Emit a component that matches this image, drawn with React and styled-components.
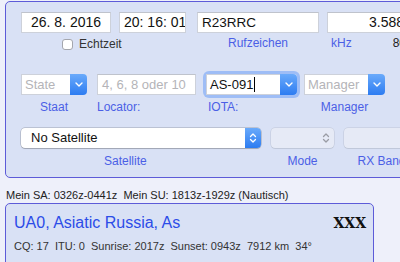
import React from "react";
import styled, { createGlobalStyle } from "styled-components";

const Global = createGlobalStyle`
  html, body { margin: 0; padding: 0; }
  body {
    background: #eef0fa;
    font-family: "Liberation Sans", Arial, sans-serif;
    width: 400px;
    height: 262px;
    overflow: hidden;
  }
`;

const Page = styled.div`
  width: 400px;
  height: 262px;
  overflow: hidden;
`;

const Panel = styled.div`
  box-sizing: border-box;
  margin: ${(p) => p.$margin};
  width: ${(p) => p.$width}px;
  background: #d9e1f5;
  border: 1px solid #5d5bd8;
  border-radius: 5px;
  padding: ${(p) => p.$pad};
`;

const Row = styled.div`
  display: flex;
  align-items: flex-start;
  margin-top: ${(p) => p.$top || 0}px;
`;

const Group = styled.div`
  display: flex;
  flex-direction: column;
  width: ${(p) => p.$w}px;
  margin-right: ${(p) => p.$mr || 0}px;
  flex-shrink: 0;
`;

const TextField = styled.div`
  box-sizing: border-box;
  height: 21px;
  background: #fff;
  border: 1px solid #cdd1da;
  border-top-color: #bfc3cc;
  font-size: ${(p) => p.$fs || 14}px;
  line-height: 19px;
  color: ${(p) => (p.$ph ? "#b4b4b8" : "#111")};
  padding: 0 4px;
  text-align: ${(p) => p.$align || "left"};
  white-space: nowrap;
  overflow: hidden;
`;

const Label = styled.div`
  font-size: 12px;
  line-height: 14px;
  color: ${(p) => (p.$dark ? "#222" : "#4b5fe6")};
  margin-top: ${(p) => p.$top ?? 3}px;
  padding-left: ${(p) => p.$pl || 0}px;
  text-align: ${(p) => p.$align || "left"};
  white-space: nowrap;
`;

const LabelPair = styled.div`
  display: flex;
  gap: 41px;
  margin-top: 3px;
  padding-left: 4px;
`;

const FieldPair = styled.div`
  display: flex;
  gap: 8px;
`;

const CheckRow = styled.label`
  display: flex;
  align-items: center;
  gap: 6px;
  margin-top: 5px;
  padding-left: 41px;
  font-size: 12px;
  line-height: 12px;
  color: #333;
`;

const CheckBox = styled.span`
  box-sizing: border-box;
  width: 11px;
  height: 11px;
  background: #fff;
  border: 1px solid #a4a6ad;
  border-radius: 3px;
`;

const Combo = styled.div`
  display: flex;
  height: 21px;
  border-radius: 3px;
  box-shadow: ${(p) => (p.$focus ? "0 0 0 3px rgba(110,160,245,0.55)" : "none")};
`;

const ComboText = styled.div`
  box-sizing: border-box;
  flex: 1;
  min-width: 0;
  background: #fff;
  border: 1px solid #cdd1da;
  border-right: none;
  font-size: 13px;
  line-height: 19px;
  padding: 0 3px;
  color: ${(p) => (p.$ph ? "#b4b4b8" : "#111")};
  display: flex;
  align-items: center;
  white-space: nowrap;
  overflow: hidden;
`;

const Caret = styled.span`
  display: inline-block;
  width: 1px;
  height: 15px;
  background: #000;
  margin-left: 1px;
`;

const BlueButton = styled.div`
  width: ${(p) => p.$w || 17}px;
  flex-shrink: 0;
  background: linear-gradient(#6aaafb, #2d7cf1);
  border-radius: 0 4px 4px 0;
  display: flex;
  align-items: center;
  justify-content: center;
`;

const Popup = styled.div`
  box-sizing: border-box;
  display: flex;
  height: 20px;
  border-radius: 4px;
  background: ${(p) => (p.$disabled ? "#e6eaf6" : "#fff")};
  box-shadow: 0 0 0 0.5px rgba(0, 0, 0, ${(p) => (p.$disabled ? 0.12 : 0.28)}),
    0 1px 1px rgba(0, 0, 0, ${(p) => (p.$disabled ? 0.06 : 0.15)});
`;

const PopupText = styled.div`
  flex: 1;
  font-size: 13px;
  line-height: 20px;
  padding-left: 10px;
  color: #111;
  white-space: nowrap;
`;

const GrayArrows = styled.div`
  width: 17px;
  display: flex;
  align-items: center;
  justify-content: center;
`;

const InfoLine = styled.div`
  font-size: 11px;
  line-height: 13px;
  color: #222;
  margin: 11px 0 0 6px;
  white-space: pre;
`;

const TitleRow = styled.div`
  display: flex;
  justify-content: space-between;
  align-items: flex-start;
`;

const Title = styled.div`
  font-size: 16px;
  line-height: 19px;
  color: #2c4ce8;
`;

const Mark = styled.div`
  font-family: "DejaVu Serif", "Liberation Serif", serif;
  font-weight: bold;
  font-size: 14px;
  line-height: 19px;
  margin-top: 1px;
  color: #111;
`;

const Details = styled.div`
  font-size: 11px;
  line-height: 13px;
  color: #333;
  margin-top: 7px;
  white-space: pre;
`;

const ChevronDown = ({ color = "#fff" }) => (
  <svg width="8" height="5" viewBox="0 0 8 5">
    <polyline points="1,1 4,4 7,1" fill="none" stroke={color} strokeWidth="1.4" strokeLinecap="round" strokeLinejoin="round" />
  </svg>
);

const UpDown = ({ color = "#fff" }) => (
  <svg width="8" height="12" viewBox="0 0 8 12">
    <polyline points="1.5,4.5 4,2 6.5,4.5" fill="none" stroke={color} strokeWidth="1.3" strokeLinecap="round" strokeLinejoin="round" />
    <polyline points="1.5,7.5 4,10 6.5,7.5" fill="none" stroke={color} strokeWidth="1.3" strokeLinecap="round" strokeLinejoin="round" />
  </svg>
);

export default function App() {
  return (
    <Page>
      <Global />
      <Panel $margin="1px 0 0 5px" $width={440} $pad="10px 0 9px 15px">
        <Row>
          <Group $w={165} $mr={11}>
            <FieldPair>
              <TextField style={{ width: 90 }} $align="center">26. 8. 2016</TextField>
              <TextField style={{ width: 67 }} $align="center">20: 16: 01</TextField>
            </FieldPair>
            <CheckRow>
              <CheckBox />
              Echtzeit
            </CheckRow>
          </Group>
          <Group $w={122} $mr={8}>
            <TextField $fs={13.5}>R23RRC</TextField>
            <Label $align="center">Rufzeichen</Label>
          </Group>
          <Group $w={82}>
            <TextField $align="right">3.588</TextField>
            <LabelPair>
              <Label $top={0}>kHz</Label>
              <Label $top={0} $dark>80m</Label>
            </LabelPair>
          </Group>
        </Row>

        <Row $top={24}>
          <Group $w={66} $mr={10}>
            <Combo>
              <ComboText $ph>State</ComboText>
              <BlueButton><ChevronDown /></BlueButton>
            </Combo>
            <Label $top={5} $align="center">Staat</Label>
          </Group>
          <Group $w={99} $mr={10}>
            <TextField $fs={13} $ph>4, 6, 8 oder 10</TextField>
            <Label $top={5}>Locator:</Label>
          </Group>
          <Group $w={91} $mr={7}>
            <Combo $focus>
              <ComboText>AS-091<Caret /></ComboText>
              <BlueButton><ChevronDown /></BlueButton>
            </Combo>
            <Label $top={5} $pl={2}>IOTA:</Label>
          </Group>
          <Group $w={81}>
            <Combo>
              <ComboText $ph>Manager</ComboText>
              <BlueButton><ChevronDown /></BlueButton>
            </Combo>
            <Label $top={5} $align="center">Manager</Label>
          </Group>
        </Row>

        <Row $top={14}>
          <Group $w={240} $mr={10}>
            <Popup>
              <PopupText>No Satellite</PopupText>
              <BlueButton $w={16}><UpDown /></BlueButton>
            </Popup>
            <Label $top={6} $pl={83}>Satellite</Label>
          </Group>
          <Group $w={63} $mr={10}>
            <Popup $disabled>
              <PopupText />
              <GrayArrows><UpDown color="#9a9ca4" /></GrayArrows>
            </Popup>
            <Label $top={6} $align="center">Mode</Label>
          </Group>
          <Group $w={75}>
            <Popup $disabled>
              <PopupText />
              <GrayArrows><UpDown color="#9a9ca4" /></GrayArrows>
            </Popup>
            <Label $top={6} $align="center">RX Band</Label>
          </Group>
        </Row>
      </Panel>

      <InfoLine>{"Mein SA: 0326z-0441z  Mein SU: 1813z-1929z (Nautisch)"}</InfoLine>

      <Panel $margin="1px 0 0 5px" $width={369} $pad="9px 7px 20px 8px">
        <TitleRow>
          <Title>UA0, Asiatic Russia, As</Title>
          <Mark>XXX</Mark>
        </TitleRow>
        <Details>{"CQ: 17  ITU: 0  Sunrise: 2017z  Sunset: 0943z  7912 km  34°"}</Details>
      </Panel>
    </Page>
  );
}
